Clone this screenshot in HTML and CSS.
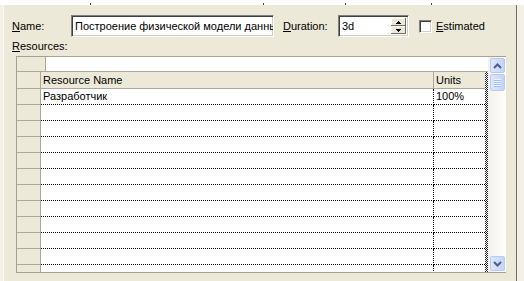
FILE: index.html
```html
<!DOCTYPE html>
<html lang="ru">
<head>
    <meta charset="UTF-8">
    <title>Task Form</title>
    <link rel="stylesheet" href="styles.css">
</head>
<body>
    <div class="ruler"></div>
    <div class="frame">
      <div class="panel">
        <div class="fields">
          <span class="lbl lbl-name"><u>N</u>ame:</span>
          <div class="field field-name">Построение физической модели данных</div>
          <span class="lbl lbl-dur"><u>D</u>uration:</span>
          <div class="field field-dur">
            <span class="field-text">3d</span>
            <span class="spin">
              <span class="spin-btn"><svg width="5" height="3" viewBox="0 0 5 3"><path d="M2 0h1v1h1v1h1v1H0V2h1V1h1z" fill="#000"/></svg></span>
              <span class="spin-btn"><svg width="5" height="3" viewBox="0 0 5 3"><path d="M0 0h5v1H4v1H3v1H2V2H1V1H0z" fill="#000"/></svg></span>
            </span>
          </div>
          <span class="check"></span>
          <span class="lbl lbl-est"><u>E</u>stimated</span>
        </div>

        <div class="res-label"><u>R</u>esources:</div>

        <div class="grid">
          <div class="grid-main">
            <div class="entry-row">
              <div class="entry-sel"></div>
              <div class="entry-edit"></div>
            </div>
            <div class="grid-body">
              <div class="table">
                <div class="row head">
                  <div class="c-sel"></div>
                  <div class="c-name">Resource Name</div>
                  <div class="c-units">Units</div>
                </div>
                <div class="row"><div class="c-sel"></div><div class="c-name">Разработчик</div><div class="c-units">100%</div></div>
                <div class="row"><div class="c-sel"></div><div class="c-name"></div><div class="c-units"></div></div>
                <div class="row"><div class="c-sel"></div><div class="c-name"></div><div class="c-units"></div></div>
                <div class="row"><div class="c-sel"></div><div class="c-name"></div><div class="c-units"></div></div>
                <div class="row"><div class="c-sel"></div><div class="c-name"></div><div class="c-units"></div></div>
                <div class="row"><div class="c-sel"></div><div class="c-name"></div><div class="c-units"></div></div>
                <div class="row"><div class="c-sel"></div><div class="c-name"></div><div class="c-units"></div></div>
                <div class="row"><div class="c-sel"></div><div class="c-name"></div><div class="c-units"></div></div>
                <div class="row"><div class="c-sel"></div><div class="c-name"></div><div class="c-units"></div></div>
                <div class="row"><div class="c-sel"></div><div class="c-name"></div><div class="c-units"></div></div>
                <div class="row"><div class="c-sel"></div><div class="c-name"></div><div class="c-units"></div></div>
                <div class="row"><div class="c-sel"></div><div class="c-name"></div><div class="c-units"></div></div>
              </div>
              <div class="split"></div>
            </div>
          </div>

          <div class="scrollbar">
            <div class="sb-btn">
              <svg width="9" height="6" viewBox="0 0 9 6"><path d="M1 5l3.5-3.5L8 5" fill="none" stroke="#4D6185" stroke-width="2"/></svg>
            </div>
            <div class="sb-thumb">
              <span></span><span></span><span></span><span></span>
            </div>
            <div class="sb-btn sb-down">
              <svg width="9" height="6" viewBox="0 0 9 6"><path d="M1 1l3.5 3.5L8 1" fill="none" stroke="#4D6185" stroke-width="2"/></svg>
            </div>
          </div>
        </div>
      </div>
    </div>
</body>
</html>
```

FILE: styles.css
```css
body {
    margin: 0;
    background: #fff;
    font-family: "Liberation Sans", Arial, sans-serif;
    font-size: 11px;
    color: #000;
}

/* thin white strip with tick marks above the form */
.ruler {
    height: 5px;
    background:
        linear-gradient(#444, #444) 90px 3px / 1px 2px no-repeat,
        linear-gradient(#444, #444) 263px 3px / 1px 2px no-repeat,
        linear-gradient(#444, #444) 345px 3px / 1px 2px no-repeat,
        linear-gradient(#444, #444) 431px 3px / 1px 2px no-repeat,
        #fff;
}

.frame {
    display: flex;
    height: 276px;
    background: #F2F0E7;
}

.panel {
    box-sizing: border-box;
    width: 514px;
    margin-left: 3px;
    padding: 10px 0 0 8px;
    background: #ECE9D8;
    border-left: 1px solid #FAF9F3;
    border-right: 1px solid #6F6D62;
}

.fields {
    display: flex;
    align-items: center;
    height: 22px;
}

.lbl {
    white-space: nowrap;
}
.lbl-name { width: 59px; }
.lbl-dur { width: 55px; margin-left: 9px; }
.lbl-est { margin-left: 4px; }

.field {
    box-sizing: border-box;
    height: 22px;
    background: #fff;
    border: 1px solid;
    border-color: #808080 #fff #fff #808080;
    box-shadow: inset 1px 1px #404040, inset -1px -1px #D4D0C8;
    line-height: 20px;
    padding-left: 3px;
    white-space: nowrap;
    overflow: hidden;
}
.field-name { width: 203px; }
.field-dur {
    width: 71px;
    display: flex;
    padding: 2px 2px 2px 3px;
    line-height: 16px;
}
.field-text { flex: 1; }

.spin {
    display: flex;
    flex-direction: column;
    width: 15px;
}
.spin-btn {
    flex: 1;
    display: flex;
    align-items: center;
    justify-content: center;
    background: #ECE9D8;
    box-shadow: inset -1px -1px #716F64, inset 1px 1px #fff;
}

.check {
    box-sizing: border-box;
    width: 13px;
    height: 13px;
    margin-left: 10px;
    background: #fff;
    border: 1px solid;
    border-color: #808080 #fff #fff #808080;
    box-shadow: inset 1px 1px #404040, inset -1px -1px #D4D0C8;
}

.res-label {
    height: 19px;
    line-height: 19px;
}

/* resource grid */
.grid {
    box-sizing: border-box;
    display: flex;
    width: 490px;
    height: 217px;
    margin-left: 4px;
    border-top: 1px solid #A5A291;
    border-left: 1px solid #A5A291;
    border-bottom: 1px solid #A5A291;
}

.grid-main {
    width: 471px;
    display: flex;
    flex-direction: column;
}

.entry-row {
    box-sizing: border-box;
    display: flex;
    height: 15px;
    border-bottom: 1px solid #ACA899;
}
.entry-sel {
    width: 28px;
    background: #ECE9D8;
    border-right: 1px solid #ACA899;
}
.entry-edit {
    flex: 1;
    background: #fff;
}

.grid-body {
    flex: 1;
    display: flex;
    overflow: hidden;
}

.table {
    width: 468px;
    background: #fff;
}

.split {
    width: 3px;
    background: repeating-conic-gradient(#222 0 25%, #fff 0 50%) 0 0 / 2px 2px;
}

.row {
    box-sizing: border-box;
    display: flex;
    height: 16px;
    line-height: 15px;
}
.row > div {
    box-sizing: border-box;
    white-space: nowrap;
    overflow: hidden;
}
.c-sel {
    width: 24px;
    background: #ECE9D8;
    border-right: 1px solid #ACA899;
    border-bottom: 1px solid #ACA899;
}
.c-name {
    width: 393px;
    padding-left: 2px;
    border-right: 1px dotted #000;
    border-bottom: 1px dotted #000;
}
.c-units {
    width: 51px;
    padding-left: 2px;
    border-bottom: 1px dotted #000;
}

.row.head {
    height: 17px;
    line-height: 16px;
}
.head > div {
    background: #ECE9D8;
    border-bottom: 1px solid #ACA899;
}
.head .c-name {
    border-right: 1px solid #ACA899;
}

/* scrollbar */
.scrollbar {
    box-sizing: border-box;
    width: 18px;
    display: flex;
    flex-direction: column;
    padding: 1px 1px 1px 2px;
    background: linear-gradient(to right, #F3F1EC, #FEFEFB);
}
.sb-btn, .sb-thumb {
    box-sizing: border-box;
    width: 15px;
    border: 1px solid #B9CBF3;
    border-radius: 2px;
    background: linear-gradient(to right, #DCE6FE, #C3D4FC);
    display: flex;
    align-items: center;
    justify-content: center;
}
.sb-btn {
    height: 15px;
}
.sb-thumb {
    height: 17px;
    margin-top: 1px;
    flex-direction: column;
    gap: 1px;
}
.sb-thumb span {
    width: 7px;
    height: 1px;
    background: #EEF4FE;
    box-shadow: 0 1px #A6BDEE;
}
.sb-thumb span + span {
    margin-top: 0;
}
.sb-down {
    margin-top: auto;
}
```
